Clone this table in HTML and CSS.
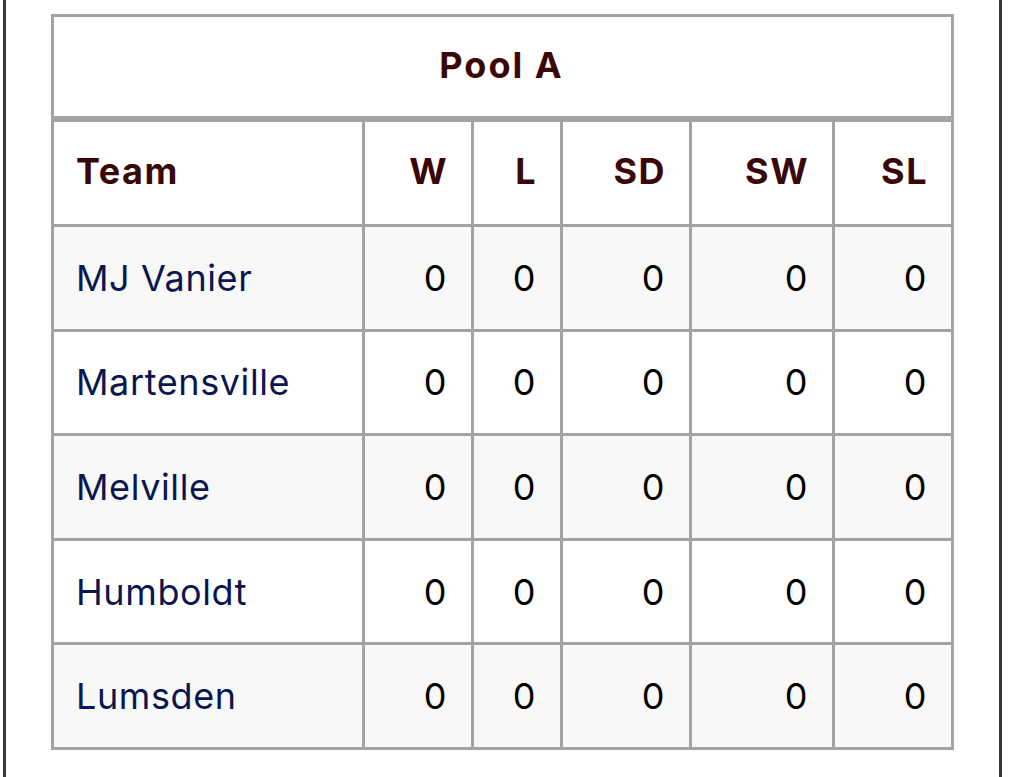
FILE: index.html
```html
<!DOCTYPE html>
<html lang="en">
<head>
<meta charset="utf-8">
<title>Pool A</title>
<link rel="stylesheet" href="styles.css">
</head>
<body>
<div class="frame">
  <table class="standings">
    <colgroup>
      <col class="c-team">
      <col class="c-w">
      <col class="c-l">
      <col class="c-sd">
      <col class="c-sw">
      <col class="c-sl">
    </colgroup>
    <thead>
      <tr class="pool-row"><th colspan="6" class="pool">Pool A</th></tr>
      <tr class="head-row">
        <th class="team">Team</th>
        <th class="num">W</th>
        <th class="num">L</th>
        <th class="num">SD</th>
        <th class="num">SW</th>
        <th class="num">SL</th>
      </tr>
    </thead>
    <tbody>
      <tr><td class="team"><a href="#">MJ Vanier</a></td><td class="num">0</td><td class="num">0</td><td class="num">0</td><td class="num">0</td><td class="num">0</td></tr>
      <tr><td class="team"><a href="#">Martensville</a></td><td class="num">0</td><td class="num">0</td><td class="num">0</td><td class="num">0</td><td class="num">0</td></tr>
      <tr><td class="team"><a href="#">Melville</a></td><td class="num">0</td><td class="num">0</td><td class="num">0</td><td class="num">0</td><td class="num">0</td></tr>
      <tr><td class="team"><a href="#">Humboldt</a></td><td class="num">0</td><td class="num">0</td><td class="num">0</td><td class="num">0</td><td class="num">0</td></tr>
      <tr><td class="team"><a href="#">Lumsden</a></td><td class="num">0</td><td class="num">0</td><td class="num">0</td><td class="num">0</td><td class="num">0</td></tr>
    </tbody>
  </table>
</div>
</body>
</html>
```

FILE: styles.css
```css
html, body {
  margin: 0;
  padding: 0;
  background: #ffffff;
}

body {
  font-family: "Inter", "Lato", "Liberation Sans", sans-serif;
}

.frame {
  box-sizing: border-box;
  margin-left: 3px;
  width: 999px;
  min-height: 777px;
  border-left: 3px solid #363636;
  border-right: 3px solid #363636;
  padding: 14px 45px 0 45px;
}

.standings {
  border-collapse: collapse;
  table-layout: fixed;
  width: 903px;
  font-size: 36px;
}

.c-team { width: 311px; }
.c-w { width: 109px; }
.c-l { width: 89px; }
.c-sd { width: 129px; }
.c-sw { width: 143px; }
.c-sl { width: 119px; }

.standings th,
.standings td {
  border: 3px solid #a3a3a3;
  padding: 0 24px 0 22px;
  vertical-align: middle;
}

.standings th {
  color: #3a0707;
  font-weight: 700;
  letter-spacing: 1.5px;
  padding-bottom: 4px;
}

.standings th.num {
  padding-right: 23px;
}

.pool-row th {
  height: 95px;
  text-align: center;
  border-bottom-width: 6px;
  letter-spacing: 2px;
}

.head-row th {
  height: 98px;
}

.standings td {
  height: 101.6px;
  color: #000000;
  font-weight: 400;
  letter-spacing: 0.6px;
}

.standings tbody tr:nth-child(odd) td {
  background: #f8f8f8;
}

.team {
  text-align: left;
}

.num {
  text-align: right;
}

.team a {
  color: #0b1650;
  text-decoration: none;
}
```
